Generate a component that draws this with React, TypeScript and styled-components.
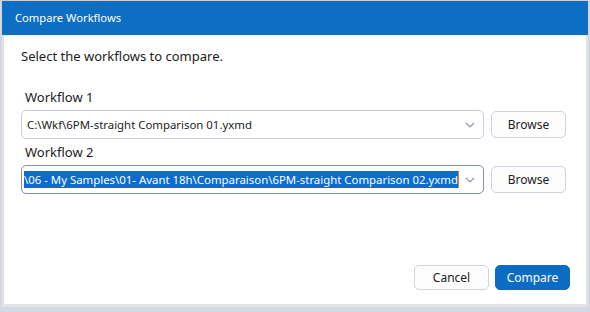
import React from "react";
import styled, { createGlobalStyle } from "styled-components";

const Global = createGlobalStyle`
  html, body { margin: 0; padding: 0; }
  body {
    background: #d3d9e3;
    width: 590px;
    height: 312px;
    overflow: hidden;
    font-family: "Noto Sans", "Open Sans", sans-serif;
  }
`;

const Frame = styled.div`
  border-top: 1px solid #c9ced6;
  padding-left: 2px;
  width: 586px;
`;

const TitleBar = styled.div`
  height: 34px;
  background: #0c6fc3;
  color: #ffffff;
  font-size: 11.2px;
  display: flex;
  align-items: center;
  padding-left: 13px;
  padding-bottom: 2px;
  box-sizing: border-box;
`;

const Body = styled.div`
  background: #ffffff;
  border-left: 2px solid #e1e3e6;
  border-right: 2px solid #e1e3e6;
  border-bottom: 3px solid #e4e4e4;
  height: 272px;
  box-sizing: border-box;
  padding: 11px 20px 0 17px;
  display: flex;
  flex-direction: column;
  color: #1b1b1b;
`;

const Intro = styled.div`
  font-size: 13px;
  line-height: 20px;
  margin-bottom: 21px;
`;

const Label = styled.div`
  font-size: 13px;
  line-height: 20px;
  padding-left: 4px;
  margin-bottom: 3px;
`;

const Row = styled.div`
  display: flex;
  align-items: center;
  gap: 7px;
  margin-bottom: 3px;
`;

const Combo = styled.div<{ $focused?: boolean }>`
  width: 463px;
  height: 29px;
  box-sizing: border-box;
  border: 1px solid ${(p) => (p.$focused ? "#8290ab" : "#c7cede")};
  border-radius: 5px;
  display: flex;
  align-items: center;
  padding: 0 8px 0 2px;
  background: #fff;
`;

const ComboText = styled.div<{ $inset?: boolean }>`
  flex: 1;
  overflow: hidden;
  white-space: nowrap;
  font-size: 11.4px;
  display: flex;
  justify-content: flex-start;
  padding-left: ${(p) => (p.$inset ? "3px" : "0")};
`;

const Selected = styled.span`
  background: #0b6bcf;
  color: #ffffff;
  line-height: 17px;
  border-right: 1px solid #e07b20;
  white-space: nowrap;
`;

const Chevron = styled.svg`
  width: 10px;
  height: 6px;
  flex: none;
  margin-left: 6px;
`;

const Button = styled.button<{ $primary?: boolean; $short?: boolean }>`
  width: 75px;
  height: ${(p) => (p.$short ? "25px" : "27px")};
  box-sizing: border-box;
  border-radius: 5px;
  border: 1px solid ${(p) => (p.$primary ? "#0c6cc4" : "#cdd3df")};
  background: ${(p) => (p.$primary ? "#0c6cc4" : "#fdfdfd")};
  color: ${(p) => (p.$primary ? "#ffffff" : "#1b1b1b")};
  font-family: "Noto Sans", "Open Sans", sans-serif;
  font-size: 12px;
  padding: 0;
  cursor: pointer;
`;

const Footer = styled.div`
  margin-top: auto;
  margin-bottom: 14px;
  margin-right: -4px;
  display: flex;
  justify-content: flex-end;
  gap: 6px;
`;

const Down = () => (
  <Chevron viewBox="0 0 10 6">
    <path d="M1 1 L5 5 L9 1" fill="none" stroke="#8c95a6" strokeWidth="1.2" />
  </Chevron>
);

export default function App() {
  return (
    <>
      <Global />
      <Frame>
        <TitleBar>Compare Workflows</TitleBar>
        <Body>
          <Intro>Select the workflows to compare.</Intro>
          <Label>Workflow 1</Label>
          <Row>
            <Combo>
              <ComboText $inset>
                <span>C:\Wkf\6PM-straight Comparison 01.yxmd</span>
              </ComboText>
              <Down />
            </Combo>
            <Button>Browse</Button>
          </Row>
          <Label>Workflow 2</Label>
          <Row>
            <Combo $focused>
              <ComboText>
                <Selected>
                  \06 - My Samples\01- Avant 18h\Comparaison\6PM-straight Comparison 02.yxmd
                </Selected>
              </ComboText>
              <Down />
            </Combo>
            <Button>Browse</Button>
          </Row>
          <Footer>
            <Button $short>Cancel</Button>
            <Button $short $primary>Compare</Button>
          </Footer>
        </Body>
      </Frame>
    </>
  );
}
